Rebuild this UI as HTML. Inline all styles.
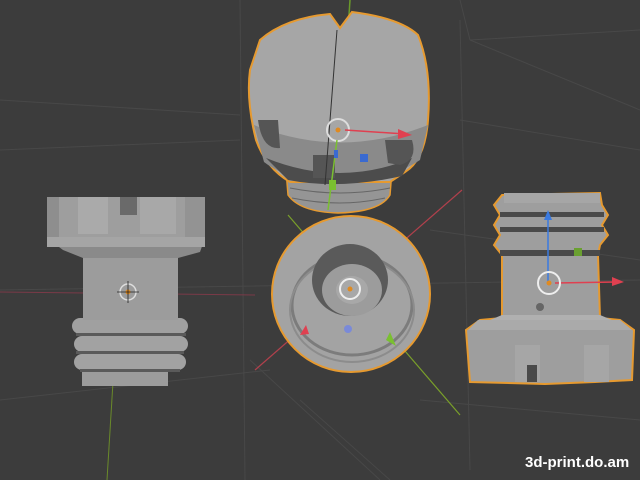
<!DOCTYPE html>
<html><head><meta charset="utf-8"><style>
html,body{margin:0;padding:0;background:#3c3c3c;width:640px;height:480px;overflow:hidden}
svg{display:block}
.t{font-family:"Liberation Sans",sans-serif;font-weight:bold;font-size:15px;fill:#fff}
</style></head><body>
<svg width="640" height="480" viewBox="0 0 640 480" xmlns="http://www.w3.org/2000/svg">
<rect width="640" height="480" fill="#3c3c3c"/>
<g stroke="#484848" stroke-width="1" fill="none">
<path d="M240 0 L245 480 M0 150 L240 140 M0 290 L640 280 M460 0 L470 40 M470 40 L640 30 M470 40 L640 110 M460 120 L640 150 M0 400 L270 370 M250 360 L380 480 M300 400 L390 480 M430 230 L640 260 M420 400 L640 420 M460 20 L470 470 M0 100 L240 115"/>
</g>
<line x1="0" y1="292" x2="255" y2="295" stroke="#7a3a48" stroke-width="1"/>
<line x1="118" y1="300" x2="107" y2="480" stroke="#6a8a2a" stroke-width="1"/>
<line x1="350" y1="0" x2="348" y2="30" stroke="#6a9a2a" stroke-width="1.5"/>
<line x1="255" y1="370" x2="462" y2="190" stroke="#b0404c" stroke-width="1.2"/>
<line x1="288" y1="215" x2="460" y2="415" stroke="#7aa02a" stroke-width="1.2"/>

<!-- LEFT OBJECT -->
<g>
<rect x="82" y="360" width="86" height="26" fill="#9c9c9c"/>
<rect x="72" y="318" width="116" height="16" rx="8" fill="#a0a0a0"/>
<rect x="74" y="336" width="114" height="16" rx="8" fill="#a2a2a2"/>
<rect x="74" y="354" width="112" height="16" rx="8" fill="#a2a2a2"/>
<rect x="76" y="333" width="110" height="3" fill="#5a5a5a"/>
<rect x="76" y="351" width="108" height="3" fill="#5a5a5a"/>
<rect x="80" y="369" width="100" height="3" fill="#5a5a5a"/>
<rect x="83" y="258" width="95" height="62" fill="#9c9c9c"/>
<path d="M47 238 L205 238 L200 252 L178 258 L83 258 L63 250 Z" fill="#8a8a8a"/>
<rect x="47" y="197" width="158" height="45" fill="#9e9e9e"/>
<rect x="47" y="237" width="158" height="10" fill="#a5a5a5"/>
<rect x="47" y="197" width="12" height="40" fill="#8e8e8e"/>
<rect x="78" y="197" width="30" height="37" fill="#aaaaaa"/>
<rect x="120" y="197" width="17" height="18" fill="#6a6a6a"/>
<rect x="140" y="197" width="36" height="37" fill="#a8a8a8"/>
<rect x="185" y="197" width="20" height="40" fill="#939393"/>
<circle cx="128" cy="292" r="8" fill="none" stroke="#ddd" stroke-width="1.5"/>
<circle cx="128" cy="292" r="2.5" fill="#e08a20"/>
<path d="M117 292 H139 M128 281 V303" stroke="#222" stroke-width="0.8"/>
</g>

<!-- TOP OBJECT -->
<g>
<path d="M286 170 L392 170 L390 195 Q380 212 338 213 Q300 212 288 195 Z" fill="#959595" stroke="#e69a30" stroke-width="1.5"/>
<path d="M290 188 Q340 198 390 188 M292 198 Q340 208 385 198" stroke="#666" fill="none"/>
<path d="M260 40 Q285 18 330 14 L340 28 L352 12 Q400 18 418 35 Q432 70 428 120 Q425 160 405 172 L390 182 L290 182 Q266 168 256 140 Q246 100 250 70 Z" fill="#a6a6a6" stroke="#e69a30" stroke-width="2"/>
<path d="M254 125 Q340 160 428 125 L420 160 Q390 180 340 184 Q290 182 264 162 Z" fill="#8a8a8a"/>
<path d="M266 158 Q340 188 412 158 L402 176 Q340 190 288 180 Z" fill="#4c4c4c"/>
<path d="M258 120 Q262 150 280 148 L278 120 Z" fill="#555"/>
<path d="M313 155 L335 155 L335 178 L313 178 Z" fill="#555"/>
<path d="M385 140 L412 140 Q418 160 400 165 L388 163 Z" fill="#555"/>
<path d="M337 30 L325 185" stroke="#333" stroke-width="1"/>
<circle cx="338" cy="130" r="11" fill="none" stroke="#ddd" stroke-width="2"/>
<circle cx="338" cy="130" r="2.5" fill="#e08a20"/>
<line x1="345" y1="130" x2="405" y2="134" stroke="#e04050" stroke-width="1.5"/>
<path d="M398 129 L412 135 L398 139 Z" fill="#e04050"/>
<line x1="337" y1="140" x2="328" y2="210" stroke="#7ac030" stroke-width="1.5"/>
<rect x="329" y="180" width="7" height="10" fill="#7ac030"/>
<rect x="360" y="154" width="8" height="8" fill="#3a6ad0"/>
<rect x="334" y="150" width="4" height="8" fill="#3a6ad0"/>
</g>

<!-- CENTER CIRCLE -->
<g>
<ellipse cx="351" cy="294" rx="79" ry="78" fill="#a3a3a3" stroke="#e69a30" stroke-width="2"/>
<ellipse cx="352" cy="305" rx="60" ry="50" fill="none" stroke="#7c7c7c" stroke-width="3"/>
<ellipse cx="352" cy="310" rx="62" ry="52" fill="none" stroke="#8c8c8c" stroke-width="2"/>
<ellipse cx="350" cy="280" rx="38" ry="36" fill="#5a5a5a"/>
<ellipse cx="352" cy="290" rx="30" ry="26" fill="#9c9c9c"/>
<ellipse cx="352" cy="290" rx="16" ry="14" fill="#a8a8a8"/>
<circle cx="350" cy="289" r="10" fill="none" stroke="#eee" stroke-width="2"/>
<circle cx="350" cy="289" r="2.5" fill="#e08a20"/>
<path d="M300 335 L306 325 L309 334 Z" fill="#e04050"/>
<path d="M390 332 L396 346 L386 340 Z" fill="#7ac030"/>
<circle cx="348" cy="329" r="4" fill="#7a8ad8"/>
</g>

<!-- RIGHT OBJECT -->
<g>
<path d="M505 195 L600 193 L602 205 L608 215 L602 225 L608 235 L600 245 L598 255 L600 318 L620 320 L634 330 L632 380 L595 382 L545 384 L470 382 L466 330 L480 320 L502 318 L502 255 L494 245 L500 235 L494 225 L500 215 L494 205 L502 195 Z" fill="#9e9e9e" stroke="#e69a30" stroke-width="2"/>
<rect x="504" y="193" width="96" height="10" fill="#a6a6a6"/>
<rect x="500" y="212" width="104" height="5" fill="#4a4a4a"/>
<rect x="500" y="227" width="104" height="5" fill="#4a4a4a"/>
<rect x="500" y="250" width="100" height="6" fill="#4a4a4a"/>
<path d="M478 320 L620 320 L632 330 L468 330 Z" fill="#aaaaaa"/>
<path d="M502 315 L600 315 L612 320 L490 320 Z" fill="#b0b0b0"/>
<rect x="515" y="345" width="25" height="37" fill="#a6a6a6"/>
<rect x="584" y="345" width="25" height="37" fill="#a6a6a6"/>
<rect x="527" y="365" width="10" height="17" fill="#4a4a4a"/>
<circle cx="540" cy="307" r="4" fill="#666"/>
<line x1="548" y1="283" x2="548" y2="212" stroke="#3a7ae0" stroke-width="1.5"/>
<path d="M544 220 L548 210 L552 220 Z" fill="#3a7ae0"/>
<line x1="555" y1="283" x2="615" y2="282" stroke="#e04050" stroke-width="1.5"/>
<path d="M612 277 L624 282 L612 286 Z" fill="#e04050"/>
<rect x="574" y="248" width="8" height="8" fill="#6aa030"/>
<circle cx="549" cy="283" r="11" fill="none" stroke="#eee" stroke-width="2"/>
<circle cx="549" cy="283" r="2.5" fill="#e08a20"/>
</g>

<text class="t" x="525" y="467">3d-print.do.am</text>
</svg>
</body></html>
